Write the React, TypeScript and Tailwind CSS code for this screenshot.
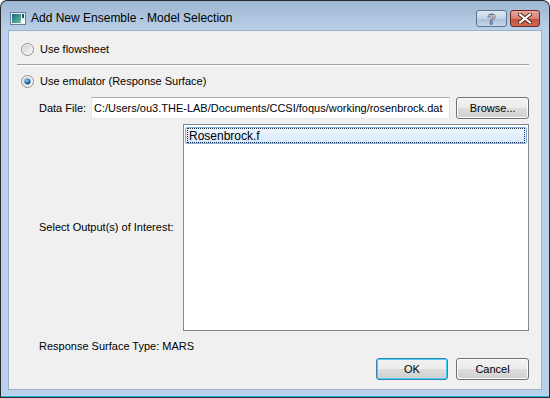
import React from "react";

function Radio({ checked }: { checked: boolean }) {
  return (
    <svg width="13" height="13" viewBox="0 0 13 13" className="shrink-0">
      <defs>
        <linearGradient id={checked ? "rg1" : "rg0"} x1="0" y1="0" x2="1" y2="1">
          <stop offset="0" stopColor="#cfcfcf" />
          <stop offset="1" stopColor="#fafafa" />
        </linearGradient>
        <radialGradient id="dot" cx="0.4" cy="0.35" r="0.7">
          <stop offset="0" stopColor="#8fd0f5" />
          <stop offset="0.5" stopColor="#2a82c9" />
          <stop offset="1" stopColor="#0c3d6e" />
        </radialGradient>
      </defs>
      <circle cx="6.5" cy="6.5" r="6" fill="#f4f4f4" stroke="#8e8f8f" strokeWidth="1" />
      <circle cx="6.5" cy="6.5" r="4.5" fill={`url(#${checked ? "rg1" : "rg0"})`} />
      {checked && <circle cx="6.5" cy="6.5" r="3" fill="url(#dot)" />}
    </svg>
  );
}

function WinButton({ label, focus, className }: { label: string; focus?: boolean; className: string }) {
  return (
    <div
      className={`${className} h-[22px] rounded-[3px] border ${
        focus ? "border-[#3c7fb1] shadow-[inset_0_0_0_1px_#48d3f5]" : "border-[#707070] shadow-[inset_0_0_0_1px_#fcfcfc]"
      } bg-[linear-gradient(#f2f2f2_0%,#ebebeb_50%,#dddddd_51%,#cfcfcf_100%)] flex items-center justify-center text-[11px] text-black`}
    >
      {label}
    </div>
  );
}

export default function App() {
  return (
    <div
      className="w-[550px] h-[398px] bg-white overflow-hidden"
      style={{ fontFamily: '"Liberation Sans", Arial, sans-serif' }}
    >
      <div className="w-[550px] h-[398px] rounded-t-[7px] border border-[#2a2a2a] border-b-0 bg-[linear-gradient(#9db6d2_0px,#a9c1db_12px,#b9d1ea_30px,#b9d1ea_100%)] flex flex-col">
        {/* title bar */}
        <div className="h-[29px] flex items-start pl-[9px] pr-[9px]">
          <svg width="16" height="16" viewBox="0 0 16 16" className="shrink-0 mt-[9px]">
            <defs>
              <linearGradient id="ic" x1="0" y1="0" x2="1" y2="1">
                <stop offset="0" stopColor="#1f5c8a" />
                <stop offset="0.5" stopColor="#3a9a8c" />
                <stop offset="1" stopColor="#6fbf9d" />
              </linearGradient>
            </defs>
            <rect x="0.5" y="2.5" width="15" height="12" fill="#e8eef4" stroke="#6b7f95" />
            <rect x="2" y="4" width="9" height="9" fill="url(#ic)" />
            <rect x="12" y="4" width="2" height="4" fill="#2a4f7a" />
            <rect x="11" y="10" width="4" height="3" fill="#ffffff" />
          </svg>
          <span className="ml-[5px] mt-[10px] leading-[14px] text-[12px] text-black">Add New Ensemble - Model Selection</span>
          <div className="ml-auto flex gap-[3px] mt-[9px]">
            <div className="w-[31px] h-[17px] rounded-[3px] border border-[#5d7390] bg-[linear-gradient(#dde8f4_0%,#c4d5e9_50%,#a9bfd9_51%,#c2d6ec_100%)] flex items-center justify-center">
              <span className="text-[14px] font-bold leading-none text-white [-webkit-text-stroke:0.8px_#4b5a6c]">?</span>
            </div>
            <div className="w-[30px] h-[17px] rounded-[3px] border border-[#6b2a22] bg-[linear-gradient(#e6a99c_0%,#d88070_50%,#c24c38_51%,#d26a52_100%)] flex items-center justify-center">
              <svg width="14" height="11" viewBox="0 0 14 11">
                <path d="M2 1.5 L12 9.5 M12 1.5 L2 9.5" stroke="#4a2520" strokeWidth="4" strokeLinecap="square" />
                <path d="M2 1.5 L12 9.5 M12 1.5 L2 9.5" stroke="#ffffff" strokeWidth="2" strokeLinecap="square" />
              </svg>
            </div>
          </div>
        </div>
        {/* client frame */}
        <div className="flex-1 px-[7px] pb-[6px] flex flex-col">
          <div className="flex-1 bg-[#f0f0f0] border border-[#9fb3c8] flex flex-col pl-[8px] pr-[12px] text-[11px] text-black">
            <div className="mt-[10px] h-[16px] flex items-center pl-[4px] gap-[6px]">
              <Radio checked={false} />
              <span>Use flowsheet</span>
            </div>
            <div className="mt-[7px] h-[2px] border-t border-[#a0a0a0] border-b border-b-white" />
            <div className="mt-[7px] h-[16px] flex items-center pl-[4px] gap-[6px]">
              <Radio checked={true} />
              <span>Use emulator (Response Surface)</span>
            </div>
            <div className="mt-[8px] h-[22px] flex items-center">
              <span className="pl-[22px] w-[74px] shrink-0">Data File:</span>
              <div className="w-[361px] h-[22px] bg-white border border-[#abadb3] border-b-[#e3e9ef] border-l-[#e2e3ea] border-r-[#dbdfe6] flex items-center pl-[2px] whitespace-nowrap overflow-hidden">
                C:/Users/ou3.THE-LAB/Documents/CCSI/foqus/working/rosenbrock.dat
              </div>
              <WinButton label="Browse..." className="ml-[6px] w-[73px]" />
            </div>
            <div className="mt-[5px] h-[207px] flex items-stretch">
              <div className="w-[166px] shrink-0 pl-[22px] flex items-center">Select Output(s) of Interest:</div>
              <div className="flex-1 bg-white border border-[#828790] p-[1px] pt-[2px]">
                <div className="h-[17px] rounded-[2px] border border-[#84acdd] bg-[linear-gradient(#f1f8fd,#d5e7fc)] flex items-center px-[1px]">
                  <div className="h-[15px] w-full border border-dotted border-[#1a2a44] flex items-center pl-[1px] text-[12px]">
                    Rosenbrock.f
                  </div>
                </div>
              </div>
            </div>
            <div className="mt-[8px] h-[14px] pl-[22px] flex items-center">Response Surface Type: MARS</div>
            <div className="mt-[5px] flex justify-end gap-[8px]">
              <WinButton label="OK" focus className="w-[72px]" />
              <WinButton label="Cancel" className="w-[73px]" />
            </div>
          </div>
        </div>
        <div className="h-[1px] bg-[#2bb3e0]" />
        <div className="h-[1px] bg-[#2a2a2a]" />
      </div>
    </div>
  );
}
